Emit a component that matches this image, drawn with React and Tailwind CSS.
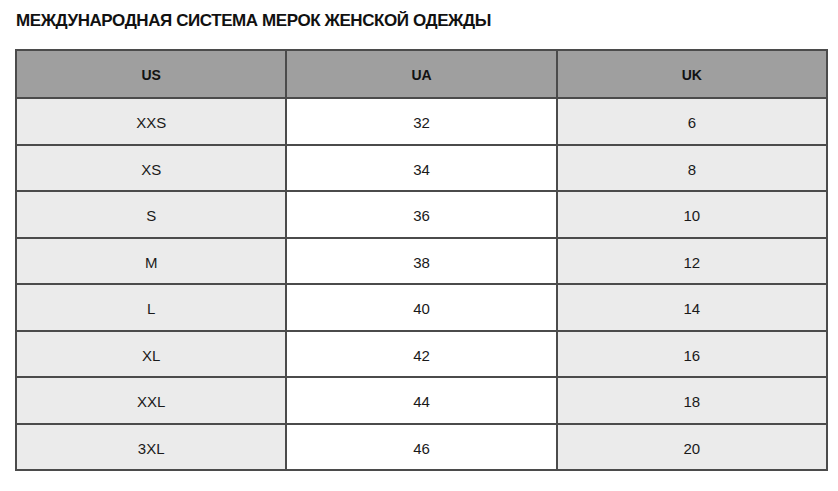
import React from "react";

const rows = [
  ["XXS", "32", "6"],
  ["XS", "34", "8"],
  ["S", "36", "10"],
  ["M", "38", "12"],
  ["L", "40", "14"],
  ["XL", "42", "16"],
  ["XXL", "44", "18"],
  ["3XL", "46", "20"],
];

export default function App() {
  return (
    <div className="w-[838px] h-[491px] bg-white px-[15px] pt-[11px]" style={{ fontFamily: '"Liberation Sans", Arial, sans-serif' }}>
      <h1 className="text-[17px] leading-[20px] font-bold text-[#111] pl-[1px] tracking-[-0.42px]">
        МЕЖДУНАРОДНАЯ СИСТЕМА МЕРОК ЖЕНСКОЙ ОДЕЖДЫ
      </h1>
      <div className="mt-[18px] w-[813px] grid grid-cols-3 gap-[2px] p-[2px] bg-[#4b4b4b]">
        {["US", "UA", "UK"].map((h) => (
          <div key={h} className="h-[46px] pt-[2px] bg-[#9f9f9f] flex items-center justify-center text-[14px] font-bold text-[#111]">
            {h}
          </div>
        ))}
        {rows.map((r, i) =>
          r.map((c, j) => (
            <div
              key={i + "-" + j}
              className={
                "h-[44.5px] pt-[4px] flex items-center justify-center text-[15px] text-[#1a1a1a] " +
                (j === 1 ? "bg-white" : "bg-[#ebebeb]")
              }
            >
              {c}
            </div>
          ))
        )}
      </div>
    </div>
  );
}
